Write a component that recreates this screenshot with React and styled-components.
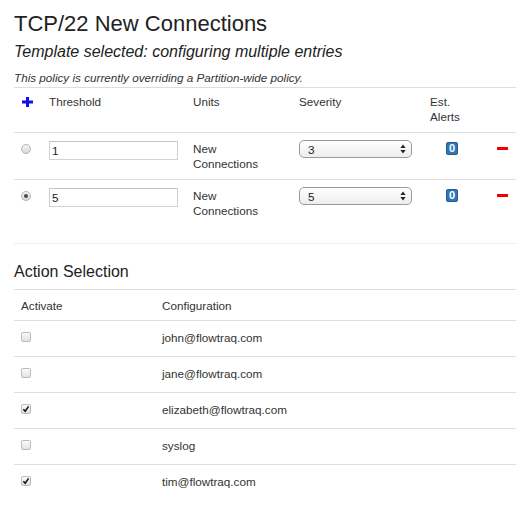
import React from "react";
import styled, { createGlobalStyle } from "styled-components";

const GlobalStyle = createGlobalStyle`
  html, body {
    margin: 0;
    padding: 0;
    background: #fff;
  }
  body {
    font-family: "Liberation Sans", Arial, Helvetica, sans-serif;
    font-size: 11.7px;
    line-height: 15px;
    color: #333;
  }
`;

const Page = styled.div`
  padding: 11px 6px 0 14px;
`;

const Title = styled.h1`
  margin: 0;
  font-size: 22px;
  line-height: 26px;
  font-weight: normal;
  color: #222;
`;

const Subtitle = styled.h2`
  margin: 5px 0 0;
  font-size: 16px;
  line-height: 20px;
  font-style: italic;
  font-weight: normal;
  color: #222;
`;

const Note = styled.p`
  margin: 8px 0 2px;
  font-style: italic;
  color: #333;
`;

const Table = styled.div`
  border-top: 1px solid #ddd;
`;

const Row = styled.div`
  display: grid;
  grid-template-columns: ${p => p.$cols};
  padding: ${p => p.$pad};
  border-bottom: 1px solid #ddd;
  &:last-child {
    border-bottom: none;
  }
`;

const Cell = styled.div`
  padding: 0 ${p => p.$px || 8}px;
  display: flex;
  flex-direction: column;
  align-items: ${p => p.$align || "flex-start"};
  min-width: 0;
`;

const Divider = styled.hr`
  margin: 17px 0 0;
  border: none;
  border-top: 1px solid #eee;
`;

const SectionTitle = styled.h3`
  margin: 19px 0 8px;
  font-size: 16px;
  line-height: 18px;
  font-weight: normal;
  color: #222;
`;

const Radio = styled.span`
  box-sizing: border-box;
  display: flex;
  align-items: center;
  justify-content: center;
  width: 10px;
  height: 10px;
  margin: 3px 0 0 -1px;
  border-radius: 50%;
  border: 1px solid #b4b4b4;
  background: linear-gradient(#f4f4f4, #d8d8d8);
  &::after {
    content: "";
    display: ${p => (p.$checked ? "block" : "none")};
    width: 4px;
    height: 4px;
    border-radius: 50%;
    background: #4a4a4a;
  }
`;

const Check = styled.span`
  box-sizing: border-box;
  display: flex;
  align-items: center;
  justify-content: center;
  width: 10px;
  height: 10px;
  margin: 2px 0 0 0;
  border-radius: 2px;
  border: 1px solid #bcbcbc;
  background: linear-gradient(#fafafa, #e2e2e2);
`;

const TextInput = styled.input`
  box-sizing: border-box;
  width: 129px;
  height: 19px;
  margin: 0;
  padding: 0 2px;
  border: 1px solid #d2d2d2;
  border-top-color: #c4c4c4;
  font-family: inherit;
  font-size: 11.7px;
  color: #222;
  background: #fff;
  outline: none;
`;

const SelectBox = styled.div`
  box-sizing: border-box;
  display: flex;
  align-items: center;
  justify-content: space-between;
  width: 113px;
  height: 18px;
  margin-top: -1px;
  padding: 0 5px 0 8px;
  border: 1px solid #9a9a9a;
  border-radius: 5px;
  background: linear-gradient(#ffffff, #ededed);
  color: #222;
`;

const Badge = styled.span`
  display: inline-block;
  margin-top: 1px;
  padding: 0 2px;
  min-width: 6px;
  height: 11px;
  line-height: 11px;
  border-radius: 2px;
  border: 1px solid #1d5c95;
  background: #2f78b8;
  color: #fff;
  font-weight: bold;
  font-size: 11px;
  text-align: center;
`;

const IconButton = styled.span`
  display: inline-flex;
  margin-top: ${p => p.$top || 0}px;
  cursor: pointer;
`;

const PlusIcon = () => (
  <svg width="11" height="10" viewBox="0 0 11 10">
    <rect x="0" y="3.5" width="11" height="3" fill="#1010ee" />
    <rect x="4" y="0" width="3" height="10" fill="#1010ee" />
  </svg>
);

const MinusIcon = () => (
  <svg width="11" height="3" viewBox="0 0 11 3">
    <rect x="0" y="0" width="11" height="3" fill="#f00000" />
  </svg>
);

const SelectArrows = () => (
  <svg width="6" height="10" viewBox="0 0 6 10">
    <path d="M3 0.5 L5.6 4 L0.4 4 Z" fill="#222" />
    <path d="M3 9.5 L5.6 6 L0.4 6 Z" fill="#222" />
  </svg>
);

const CheckMark = () => (
  <svg width="8" height="8" viewBox="0 0 8 8">
    <path d="M1.4 4.2 L3.2 6.2 L6.6 1.4" fill="none" stroke="#111" strokeWidth="1.5" />
  </svg>
);

const thresholdCols = "27px 144px 106px 131px 60px 1fr";
const actionCols = "141px 1fr";

const thresholds = [
  { id: 1, value: "1", severity: "3", alerts: 0, selected: false },
  { id: 2, value: "5", severity: "5", alerts: 0, selected: true }
];

const actions = [
  { target: "john@flowtraq.com", active: false },
  { target: "jane@flowtraq.com", active: false },
  { target: "elizabeth@flowtraq.com", active: true },
  { target: "syslog", active: false },
  { target: "tim@flowtraq.com", active: true }
];

export default function App() {
  return (
    <Page>
      <GlobalStyle />
      <Title>TCP/22 New Connections</Title>
      <Subtitle>Template selected: configuring multiple entries</Subtitle>
      <Note>This policy is currently overriding a Partition-wide policy.</Note>

      <Table>
        <Row $cols={thresholdCols} $pad="6px 0 8px">
          <Cell>
            <IconButton $top={3}>
              <PlusIcon />
            </IconButton>
          </Cell>
          <Cell>Threshold</Cell>
          <Cell>Units</Cell>
          <Cell>Severity</Cell>
          <Cell>
            <span>Est.</span>
            <span>Alerts</span>
          </Cell>
          <Cell />
        </Row>
        {thresholds.map(t => (
          <Row key={t.id} $cols={thresholdCols} $pad="8px 0">
            <Cell>
              <Radio $checked={t.selected} />
            </Cell>
            <Cell>
              <TextInput defaultValue={t.value} />
            </Cell>
            <Cell>
              <span>New</span>
              <span>Connections</span>
            </Cell>
            <Cell>
              <SelectBox>
                <span>{t.severity}</span>
                <SelectArrows />
              </SelectBox>
            </Cell>
            <Cell $align="center">
              <Badge>{t.alerts}</Badge>
            </Cell>
            <Cell $px={15}>
              <IconButton $top={6}>
                <MinusIcon />
              </IconButton>
            </Cell>
          </Row>
        ))}
      </Table>

      <Divider />
      <SectionTitle>Action Selection</SectionTitle>

      <Table>
        <Row $cols={actionCols} $pad="8px 0 7px">
          <Cell $px={7}>Activate</Cell>
          <Cell $px={7}>Configuration</Cell>
        </Row>
        {actions.map(a => (
          <Row key={a.target} $cols={actionCols} $pad="9px 0 11px">
            <Cell $px={7}>
              <Check>{a.active && <CheckMark />}</Check>
            </Cell>
            <Cell $px={7}>{a.target}</Cell>
          </Row>
        ))}
      </Table>
    </Page>
  );
}
